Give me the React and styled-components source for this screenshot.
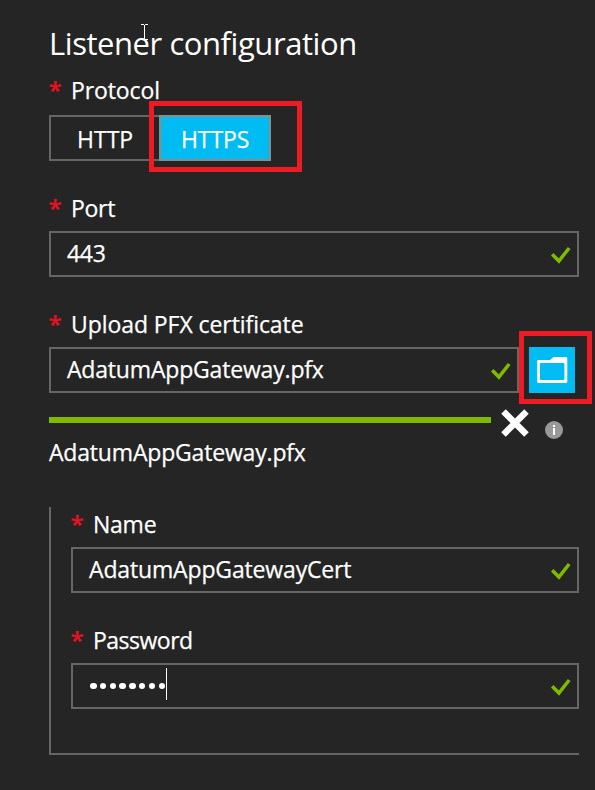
import React from "react";
import styled, { createGlobalStyle } from "styled-components";

const GlobalStyle = createGlobalStyle`
  *, *::before, *::after { box-sizing: border-box; }
  body {
    margin: 0;
    background: #252525;
    color: #fff;
    font: 23px/32px "Open Sans", "Noto Sans", sans-serif;
    -webkit-text-stroke: 0.25px currentColor;
  }
`;

const Blade = styled.main`
  display: flex;
  flex-direction: column;
  width: 595px;
  height: 790px;
  padding: 22px 16px 0 49px;
  overflow: hidden;
  background: #252525;
`;

const Title = styled.h1`
  position: relative;
  margin: 0;
  height: 52px;
  font-size: 31px;
  line-height: 43px;
  font-weight: 400;
  letter-spacing: -0.44px;
  white-space: nowrap;
  -webkit-text-stroke: 0;
`;

const Pointer = styled.svg`
  position: absolute;
  left: 92px;
  top: 2px;
`;

const LabelRow = styled.label`
  display: flex;
  height: ${(p) => p.$height || 39}px;
  flex: none;
`;

const Required = styled.span`
  width: 22px;
  margin-left: -0.5px;
  margin-right: 0.5px;
  font-size: 24px;
  line-height: 32px;
  font-weight: 600;
  color: #e81123;
`;

const Text = styled.span`
  letter-spacing: ${(p) => p.$spacing || 0}px;
  white-space: nowrap;
`;

const Toggle = styled.div`
  position: relative;
  display: flex;
  width: 222px;
  height: 46px;
  margin-bottom: 31px;
  flex: none;
`;

const Option = styled.button`
  display: flex;
  align-items: center;
  height: 46px;
  width: ${(p) => p.$width}px;
  padding: 1px 0 0 ${(p) => p.$indent}px;
  border: 2px solid ${(p) => (p.$active ? "#8c8c8c" : "#666")};
  border-right-width: ${(p) => (p.$active ? 2 : 0)}px;
  background: ${(p) => (p.$active ? "#00bcf2" : "transparent")};
  color: #fff;
  font: inherit;
`;

const Highlight = styled.div`
  position: absolute;
  left: ${(p) => p.$left}px;
  top: ${(p) => p.$top}px;
  width: ${(p) => p.$width}px;
  height: ${(p) => p.$height}px;
  border: 5px solid #ed1c24;
  pointer-events: none;
`;

const Field = styled.div`
  display: flex;
  align-items: center;
  justify-content: space-between;
  flex: ${(p) => (p.$grow ? "1" : "none")};
  height: 46px;
  padding: 0 5px 2px 16px;
  border: 2px solid #666;
`;

const Wide = styled(Field)`
  width: 530px;
`;

const FieldGap = styled.div`
  height: 31px;
  flex: none;
`;

const UploadRow = styled.div`
  position: relative;
  display: flex;
  gap: 10px;
  padding-right: 4px;
  flex: none;
`;

const Browse = styled.button`
  width: 46px;
  height: 46px;
  padding: 0;
  border: 0;
  background: #00bcf2;
`;

const ProgressRow = styled.div`
  display: flex;
  align-items: flex-start;
  height: 43px;
  padding-top: 14px;
  flex: none;
`;

const Progress = styled.div`
  width: 442px;
  height: 6px;
  margin: 10px 10px 0 0;
  background: #7fba00;
`;

const InfoIcon = styled.svg`
  margin: 14px 0 0 16px;
`;

const FileName = styled.div`
  height: 71px;
  flex: none;
`;

const Group = styled.section`
  display: flex;
  flex-direction: column;
  width: 530px;
  height: 248px;
  padding: 1px 0 0 20px;
  border-left: 2px solid #666;
  border-bottom: 2px solid #666;
  flex: none;
`;

const Secret = styled.div`
  display: flex;
  align-items: center;
  gap: 3.3px;
  height: 32px;
  padding: 2px 0 0 1px;
`;

const Dot = styled.i`
  width: 6.5px;
  height: 6.5px;
  border-radius: 50%;
  background: #fff;
`;

const Caret = styled.i`
  width: 1px;
  height: 32px;
  margin: -4px 0 0 -2px;
  background: #fff;
`;

const CheckMark = styled.svg`
  position: relative;
  top: 1px;
`;

function Check() {
  return (
    <CheckMark width="22" height="22" viewBox="0 0 22 22" fill="none">
      <path d="M2.2 11.3 8.9 18 19.2 5" stroke="#7fba00" strokeWidth="3.5" />
    </CheckMark>
  );
}

function Label({ children, spacing, height }) {
  return (
    <LabelRow $height={height}>
      <Required>*</Required>
      <Text $spacing={spacing}>{children}</Text>
    </LabelRow>
  );
}

export default function App() {
  return (
    <>
      <GlobalStyle />
      <Blade>
        <Title>
          Listener configuration
          <Pointer width="8" height="17" viewBox="0 0 8 17">
            <path d="M0 .5h3M4 .5h3M3.5 1v14M0 15.5h3M4 15.5h3" stroke="#fff" fill="none" />
          </Pointer>
        </Title>
        <Label height={41} spacing={-0.1}>Protocol</Label>
        <Toggle>
          <Option $width={110} $indent={26}><Text>HTTP</Text></Option>
          <Option $active $width={112} $indent={20}><Text $spacing={-0.1}>HTTPS</Text></Option>
          <Highlight $left={100} $top={-14} $width={153} $height={71} />
        </Toggle>
        <Label spacing={-0.3}>Port</Label>
        <Wide><Text $spacing={-0.3}>443</Text><Check /></Wide>
        <FieldGap />
        <Label spacing={-0.07}>Upload PFX certificate</Label>
        <UploadRow>
          <Field $grow><Text $spacing={-0.18}>AdatumAppGateway.pfx</Text><Check /></Field>
          <Browse aria-label="Browse">
            <svg width="46" height="46" viewBox="0 0 46 46">
              <path fill="#fff" fillRule="evenodd" d="M9.5 13H21L24.500 10H37a1.300 1.300 0 0 1 1.300 1.300V34.700a1.300 1.300 0 0 1-1.300 1.300H9.500A1.300 1.300 0 0 1 8.200 34.700V14.300A1.300 1.300 0 0 1 9.500 13ZM12 16A1 1 0 0 0 11 17V32A1 1 0 0 0 12 33H34.400A1 1 0 0 0 35.400 32V17A1 1 0 0 0 34.400 16Z" />
            </svg>
          </Browse>
          <Highlight $left={470} $top={-16} $width={73} $height={73} />
        </UploadRow>
        <ProgressRow>
          <Progress />
          <svg width="28" height="32" viewBox="0 0 28 32">
            <path d="M2.500 4.500 25.500 27.500M25.500 4.500 2.500 27.500" stroke="#fff" strokeWidth="6.400" />
          </svg>
          <InfoIcon width="18" height="18" viewBox="0 0 18 18">
            <circle cx="9" cy="9" r="9" fill="#999" />
            <path d="M8 4h2v2H8zM8 7h2V14H8z" fill="#fff" />
          </InfoIcon>
        </ProgressRow>
        <FileName><Text $spacing={-0.18}>AdatumAppGateway.pfx</Text></FileName>
        <Group>
          <Label spacing={-0.25}>Name</Label>
          <Field><Text $spacing={-0.15}>AdatumAppGatewayCert</Text><Check /></Field>
          <FieldGap />
          <Label spacing={-0.5}>Password</Label>
          <Field>
            <Secret>
              {Array.from({ length: 8 }, (_, i) => <Dot key={i} />)}
              <Caret />
            </Secret>
            <Check />
          </Field>
        </Group>
      </Blade>
    </>
  );
}
